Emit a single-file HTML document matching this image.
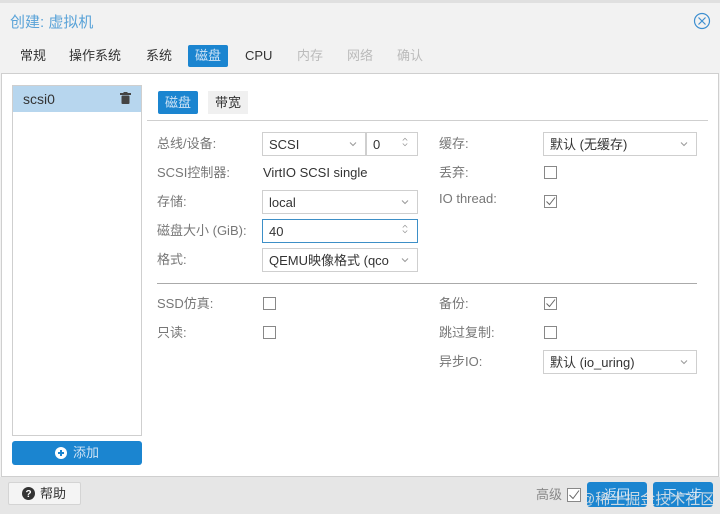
<!DOCTYPE html>
<html><head><meta charset="utf-8"><style>
*{box-sizing:border-box;margin:0;padding:0}
body{width:720px;height:514px;background:#f2f2f2;font-family:"Liberation Sans","Noto Sans CJK SC",sans-serif;font-size:13px;color:#333;position:relative;overflow:hidden}
.a{position:absolute}
.lab{position:absolute;color:#777;font-size:13px;margin-top:-3px}
.val{position:absolute;color:#333;font-size:13px}
.inp{position:absolute;height:24px;border:1px solid #cfcfcf;background:#fff;padding:0 6px;line-height:23px;font-size:13px;color:#333}
.chev{position:absolute;right:6px;top:5px;width:12px;height:12px}
.cb{position:absolute;width:13px;height:13px;border:1px solid #888;background:#fff}
.tab{position:absolute;top:45px;height:22px;line-height:22px;font-size:13px;color:#333}
</style></head><body>
<div class="a" style="left:0;top:0;width:720px;height:3px;background:#e0e0e0"></div>
<div class="a" style="left:10px;top:11px;font-size:15px;color:#5aa3d8">创建: 虚拟机</div>
<svg class="a" style="left:693px;top:12px" width="18" height="18" viewBox="0 0 18 18"><circle cx="9" cy="9" r="7.5" fill="none" stroke="#3d8fd0" stroke-width="1.2"/><path d="M5.5 5.5L12.5 12.5M12.5 5.5L5.5 12.5" stroke="#3d8fd0" stroke-width="1.2"/></svg>
<div class="tab" style="left:20px">常规</div>
<div class="tab" style="left:69px">操作系统</div>
<div class="tab" style="left:146px">系统</div>
<div class="tab" style="left:188px;width:40px;background:#1b85d0;color:#cfe3f5;text-align:center;border-radius:2px">磁盘</div>
<div class="tab" style="left:245px">CPU</div>
<div class="tab" style="left:297px;color:#bbb">内存</div>
<div class="tab" style="left:347px;color:#bbb">网络</div>
<div class="tab" style="left:397px;color:#bbb">确认</div>
<div class="a" style="left:1px;top:73px;width:718px;height:404px;background:#fff;border:1px solid #cfcfcf"></div>
<div class="a" style="left:12px;top:85px;width:130px;height:351px;border:1px solid #cfcfcf;background:#fff"></div>
<div class="a" style="left:13px;top:86px;width:128px;height:26px;background:#b7d6ee"></div>
<div class="a" style="left:23px;top:91px;font-size:14px">scsi0</div>
<svg class="a" style="left:120px;top:92px" width="11" height="12" viewBox="0 0 11 12"><rect x="0" y="1" width="11" height="2" fill="#444"/><rect x="3.5" y="0" width="4" height="2" fill="#444"/><rect x="1.5" y="3.5" width="8" height="8.5" rx="1" fill="#444"/></svg>
<div class="a" style="left:12px;top:441px;width:130px;height:24px;background:#1b85d0;border-radius:3px;color:#cfe3f5;text-align:center;line-height:24px;font-size:13px"><svg width="12" height="12" viewBox="0 0 12 12" style="vertical-align:-2px;margin-right:6px"><circle cx="6" cy="6" r="6" fill="#fff"/><path d="M6 3V9M3 6H9" stroke="#1b85d0" stroke-width="2"/></svg>添加</div>
<div class="a" style="left:158px;top:91px;width:40px;height:23px;background:#1b85d0;color:#cfe3f5;text-align:center;line-height:23px;border-radius:2px">磁盘</div>
<div class="a" style="left:208px;top:91px;width:40px;height:23px;background:#f0f0f0;text-align:center;line-height:23px">带宽</div>
<div class="a" style="left:147px;top:120px;width:561px;height:1px;background:#cfcfcf"></div>
<div class="lab" style="left:157px;top:136px">总线/设备:</div>
<div class="inp" style="left:262px;top:132px;width:104px">SCSI<svg class="chev" viewBox="0 0 12 12"><path d="M3 4.5L6 7.5L9 4.5" fill="none" stroke="#999"/></svg></div>
<div class="inp" style="left:366px;top:132px;width:52px">0<svg class="chev" style="top:3px" viewBox="0 0 12 16"><path d="M3 6L6 3L9 6M3 10L6 13L9 10" fill="none" stroke="#999"/></svg></div>
<div class="lab" style="left:157px;top:165px">SCSI控制器:</div>
<div class="val" style="left:263px;top:165px">VirtIO SCSI single</div>
<div class="lab" style="left:157px;top:194px">存储:</div>
<div class="inp" style="left:262px;top:190px;width:156px">local<svg class="chev" viewBox="0 0 12 12"><path d="M3 4.5L6 7.5L9 4.5" fill="none" stroke="#999"/></svg></div>
<div class="lab" style="left:157px;top:223px">磁盘大小 (GiB):</div>
<div class="inp" style="left:262px;top:219px;width:156px;border-color:#3d8fc7">40<svg class="chev" style="top:3px" viewBox="0 0 12 16"><path d="M3 6L6 3L9 6M3 10L6 13L9 10" fill="none" stroke="#999"/></svg></div>
<div class="lab" style="left:157px;top:252px">格式:</div>
<div class="inp" style="left:262px;top:248px;width:156px;overflow:hidden;white-space:nowrap">QEMU映像格式 (qco<svg class="chev" style="background:#fff" viewBox="0 0 12 12"><path d="M3 4.5L6 7.5L9 4.5" fill="none" stroke="#999"/></svg></div>
<div class="lab" style="left:439px;top:136px">缓存:</div>
<div class="inp" style="left:543px;top:132px;width:154px">默认 (无缓存)<svg class="chev" viewBox="0 0 12 12"><path d="M3 4.5L6 7.5L9 4.5" fill="none" stroke="#999"/></svg></div>
<div class="lab" style="left:439px;top:165px">丢弃:</div>
<div class="cb" style="left:544px;top:166px"></div>
<div class="lab" style="left:439px;top:194px">IO thread:</div>
<div class="cb" style="left:544px;top:195px"><svg width="11" height="11" viewBox="0 0 11 11" style="position:absolute;left:0;top:0"><path d="M1.5 5.5L4.5 8.5L10 1.5" fill="none" stroke="#666"/></svg></div>
<div class="a" style="left:157px;top:283px;width:540px;height:1px;background:#aaa"></div>
<div class="lab" style="left:157px;top:296px">SSD仿真:</div>
<div class="cb" style="left:263px;top:297px"></div>
<div class="lab" style="left:157px;top:325px">只读:</div>
<div class="cb" style="left:263px;top:326px"></div>
<div class="lab" style="left:439px;top:296px">备份:</div>
<div class="cb" style="left:544px;top:297px"><svg width="11" height="11" viewBox="0 0 11 11" style="position:absolute;left:0;top:0"><path d="M1.5 5.5L4.5 8.5L10 1.5" fill="none" stroke="#666"/></svg></div>
<div class="lab" style="left:439px;top:325px">跳过复制:</div>
<div class="cb" style="left:544px;top:326px"></div>
<div class="lab" style="left:439px;top:354px">异步IO:</div>
<div class="inp" style="left:543px;top:350px;width:154px">默认 (io_uring)<svg class="chev" viewBox="0 0 12 12"><path d="M3 4.5L6 7.5L9 4.5" fill="none" stroke="#999"/></svg></div>
<div class="a" style="left:0;top:477px;width:720px;height:37px;background:#e6e6e6"></div>
<div class="a" style="left:8px;top:482px;width:73px;height:23px;background:#f4f4f4;border:1px solid #d4d4d4;border-radius:2px;line-height:21px;padding-left:13px"><svg width="13" height="13" viewBox="0 0 13 13" style="vertical-align:-2px;margin-right:5px"><circle cx="6.5" cy="6.5" r="6.5" fill="#333"/><text x="6.5" y="10" font-size="10" font-weight="bold" fill="#fff" text-anchor="middle" font-family="Liberation Sans">?</text></svg>帮助</div>
<div class="lab" style="left:536px;top:487px;color:#888">高级</div>
<div class="cb" style="left:567px;top:488px;width:14px;height:14px"><svg width="12" height="12" viewBox="0 0 12 12" style="position:absolute;left:0;top:0"><path d="M1.5 6L5 9.5L11 1.5" fill="none" stroke="#666"/></svg></div>
<div class="a" style="left:587px;top:482px;width:60px;height:25px;background:#1b85d0;border-radius:3px;color:#cfe3f5;text-align:center;line-height:25px">返回</div>
<div class="a" style="left:653px;top:482px;width:60px;height:25px;background:#1b85d0;border-radius:3px;color:#cfe3f5;text-align:center;line-height:25px">下一步</div>
<div class="a" style="left:580px;top:488px;font-size:15px;color:rgba(230,230,230,.85)">@稀土掘金技术社区</div>
</body></html>
